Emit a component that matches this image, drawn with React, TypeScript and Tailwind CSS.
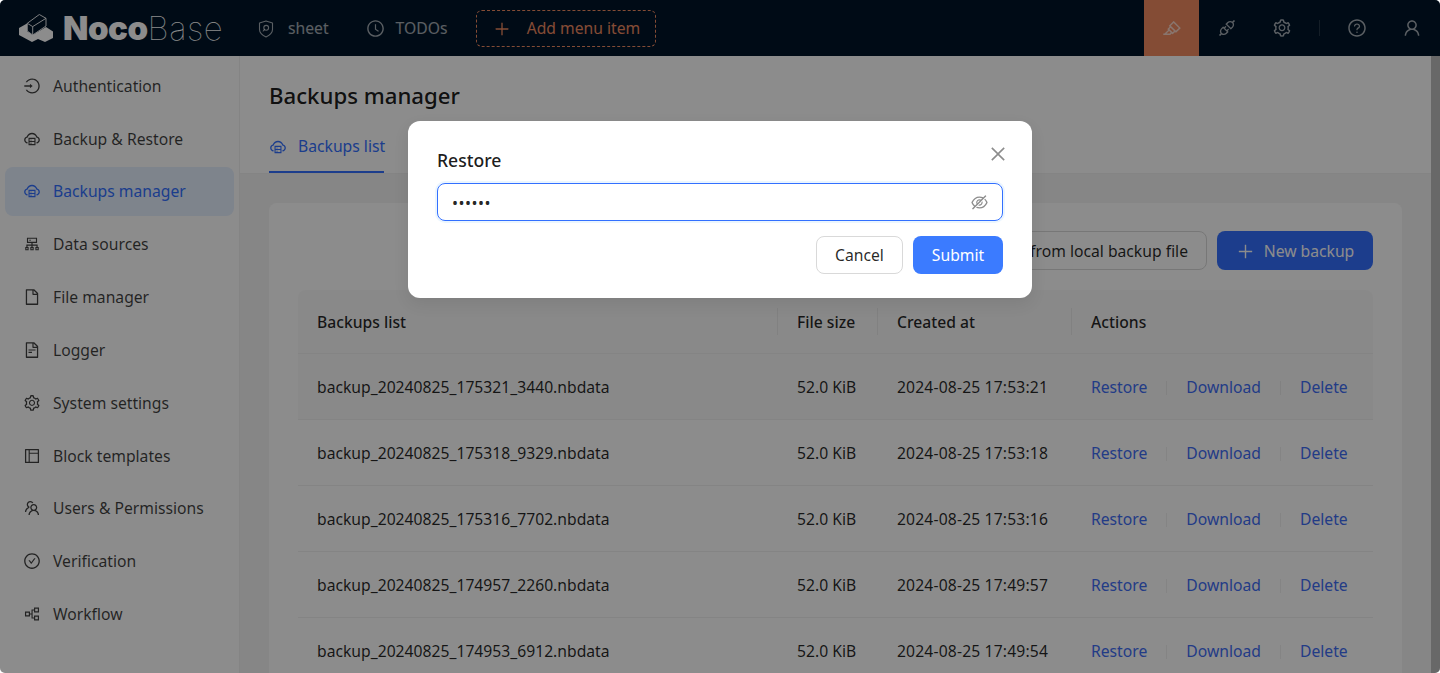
import React from "react";
import {
  AiOutlineLogin, AiOutlineCloudServer, AiOutlineCluster, AiOutlineFile, AiOutlineFileText,
  AiOutlineSetting, AiOutlineLayout, AiOutlineTeam, AiOutlineCheckCircle, AiOutlinePartition,
  AiOutlineHighlight, AiOutlineApi, AiOutlineQuestionCircle, AiOutlineUser, AiOutlineClockCircle,
  AiOutlinePlus, AiOutlineEyeInvisible, AiOutlineClose,
} from "react-icons/ai";

const menu = [
  ["Authentication", AiOutlineLogin],
  ["Backup & Restore", AiOutlineCloudServer],
  ["Backups manager", AiOutlineCloudServer],
  ["Data sources", AiOutlineCluster],
  ["File manager", AiOutlineFile],
  ["Logger", AiOutlineFileText],
  ["System settings", AiOutlineSetting],
  ["Block templates", AiOutlineLayout],
  ["Users & Permissions", AiOutlineTeam],
  ["Verification", AiOutlineCheckCircle],
  ["Workflow", AiOutlinePartition],
] as const;

const rows = [
  ["backup_20240825_175321_3440.nbdata", "2024-08-25 17:53:21"],
  ["backup_20240825_175318_9329.nbdata", "2024-08-25 17:53:18"],
  ["backup_20240825_175316_7702.nbdata", "2024-08-25 17:53:16"],
  ["backup_20240825_174957_2260.nbdata", "2024-08-25 17:49:57"],
  ["backup_20240825_174953_6912.nbdata", "2024-08-25 17:49:54"],
];

function Logo() {
  return (
    <div className="flex items-center ml-[18px] w-[240px] shrink-0">
      <svg width="36" height="28" viewBox="0 0 36 28" className="shrink-0">
        <path d="M1 14 L9 9.5 L9 17 L14.7 21 L28 13 L35 17.5 L35 24 L27 28 L20 25 L14 28 L1 21 Z" fill="#fff" />
        <path d="M9.3 9.3 L21.3 0.5 L28 4.3 L14.7 12.6 Z M14.7 12.6 L14.7 21 M9.3 9.3 L9.3 17 L14.7 21 L28 12 L28 4.3" fill="#001529" stroke="#fff" strokeWidth="0.9" strokeLinejoin="round" />
      </svg>
      <span className="ml-[9px] text-[33px] leading-none text-white font-black tracking-[-0.5px] font-['Inter',sans-serif]">Noco</span>
      <span className="text-[33px] leading-none text-white font-thin tracking-[0.5px] font-['Inter',sans-serif]">Base</span>
    </div>
  );
}

function ShieldIcon() {
  return (
    <svg width="16" height="18" viewBox="0 0 16 18" fill="none" stroke="currentColor" strokeWidth="1.1" className="shrink-0">
      <path d="M8 1 L14.5 3 L14.5 9.5 C14.5 13 11 15.5 8 17 C5 15.5 1.5 13 1.5 9.5 L1.5 3 Z" strokeLinejoin="round" />
      <circle cx="8.2" cy="7.8" r="2.4" />
      <path d="M6.5 9.6 L5.2 11" strokeLinecap="round" />
    </svg>
  );
}

function HeaderIcon({ icon: Icon, className = "" }: { icon: any; className?: string }) {
  return (
    <div className={`w-[55px] h-14 flex items-center justify-center shrink-0 ${className}`}>
      <Icon className="text-[20px] text-white/65" />
    </div>
  );
}

function Action({ children }: { children: React.ReactNode }) {
  return <span className="text-[#3f6df5]">{children}</span>;
}

export default function App() {
  return (
    <div className="bg-white w-[1440px] h-[673px] overflow-hidden">
      <div className="relative w-[1440px] h-[673px] overflow-hidden rounded-[5px] bg-[#f5f5f5] text-[15.7px] text-black/85 font-['Noto_Sans',sans-serif]">
        <header className="h-14 bg-[#001529] flex items-center">
          <Logo />
          <div className="flex items-center text-white/65 pt-[2px]">
            <ShieldIcon />
            <span className="ml-[14px]">sheet</span>
            <AiOutlineClockCircle className="text-[19px] ml-[37px]" />
            <span className="ml-[11px]">TODOs</span>
          </div>
          <div className="ml-[29px] w-[180px] h-[37px] rounded-md border border-dashed border-[#f18b62] flex items-center justify-center gap-[16px] text-[#f18b62] pt-[2px]">
            <AiOutlinePlus className="text-[18px]" />
            <span>Add menu item</span>
          </div>
          <div className="ml-auto flex items-center">
            <HeaderIcon icon={AiOutlineHighlight} className="bg-[#f18b62]" />
            <HeaderIcon icon={AiOutlineApi} />
            <HeaderIcon icon={AiOutlineSetting} />
            <div className="w-px h-4 bg-white/15 ml-[10px] mr-[9px]" />
            <HeaderIcon icon={AiOutlineQuestionCircle} className="w-[54px]" />
            <HeaderIcon icon={AiOutlineUser} className="!w-[56px]" />
          </div>
        </header>

        <div className="flex h-[617px]">
          <aside className="w-[240px] shrink-0 bg-white border-r border-black/[0.06] pt-[5.3px] px-[5px] flex flex-col gap-1">
            {menu.map(([label, Icon]) => {
              const active = label === "Backups manager";
              return (
                <div
                  key={label}
                  className={`h-[48.85px] shrink-0 pl-[18px] flex items-center gap-[12px] rounded-lg ${active ? "bg-[#e6f0ff] text-[#3370ff]" : "text-black/75"}`}
                >
                  <Icon className="text-[18px] shrink-0" />
                  <span className="pt-[1.5px]">{label}</span>
                </div>
              );
            })}
          </aside>

          <main className="flex-1 min-w-0 flex flex-col">
            <div className="h-[118px] bg-white border-b border-black/[0.06] pl-[29px] flex flex-col shrink-0">
              <h1 className="mt-[22px] text-[22.2px] leading-[36px] font-medium text-black/90">Backups manager</h1>
              <div className="mt-[12px] h-[47px] w-[115px] flex items-center gap-[11px] text-[#3370ff] border-b-2 border-[#3370ff] pb-[4px]">
                <AiOutlineCloudServer className="text-[18px] shrink-0" />
                <span className="whitespace-nowrap">Backups list</span>
              </div>
            </div>

            <div className="flex-1 pl-[29px] pr-[29px] pt-[29px] overflow-hidden">
              <div className="bg-white rounded-lg h-[600px] px-[29px] pt-[28px]">
                <div className="flex justify-end gap-[10px]">
                  <div className="h-[39px] rounded-lg border border-[#d9d9d9] flex items-center px-[18px] pt-[2px] whitespace-nowrap">
                    Restore from local backup file
                  </div>
                  <div className="h-[39px] w-[156px] rounded-lg bg-[#3370ff] text-white flex items-center justify-center gap-[9px] pt-[2px]">
                    <AiOutlinePlus className="text-[19px]" />
                    <span>New backup</span>
                  </div>
                </div>

                <div className="mt-[20px]">
                  <div className="h-[64px] bg-[#fafafa] rounded-t-lg border-b border-[#f0f0f0] grid grid-cols-[479px_100px_194px_1fr] items-center font-medium">
                    <div className="pl-[19px] pt-[2px]">Backups list</div>
                    <div className="pl-[19px] h-[27px] flex items-center border-l border-black/[0.06] pt-[2px]">File size</div>
                    <div className="pl-[19px] h-[27px] flex items-center border-l border-black/[0.06] pt-[2px]">Created at</div>
                    <div className="pl-[19px] h-[27px] flex items-center border-l border-black/[0.06] pt-[2px]">Actions</div>
                  </div>
                  {rows.map(([name, date], i) => (
                    <div
                      key={name}
                      className={`h-[65.9px] border-b border-[#f0f0f0] grid grid-cols-[479px_100px_194px_1fr] items-center pt-[3.5px] ${i === 0 ? "bg-[#fafafa]" : ""}`}
                    >
                      <div className="pl-[19px]">{name}</div>
                      <div className="pl-[20px]">52.0 KiB</div>
                      <div className="pl-[20px] tracking-[0.15px]">{date}</div>
                      <div className="pl-[20px] flex items-center">
                        <Action>Restore</Action>
                        <span className="w-px h-[14px] bg-black/[0.06] mx-[19px]" />
                        <Action>Download</Action>
                        <span className="w-px h-[14px] bg-black/[0.06] mx-[19px]" />
                        <Action>Delete</Action>
                      </div>
                    </div>
                  ))}
                </div>
              </div>
            </div>
          </main>
          <div className="w-[9px] shrink-0 bg-[#bdbdbd]" />
        </div>

        <div className="absolute inset-0 bg-black/45" />

        <div className="absolute left-[408px] top-[121px] w-[624px] h-[177px] bg-white rounded-xl shadow-[0_6px_16px_rgba(0,0,0,0.08)] px-[29px] pt-[26px]">
          <AiOutlineClose className="absolute right-[24px] top-[23px] text-[20px] text-black/45" />
          <div className="text-[17.6px] leading-[26px] font-medium text-black/90">Restore</div>
          <div className="mt-[10px] h-[38px] rounded-lg border border-[#3370ff] shadow-[0_0_0_2px_rgba(5,145,255,0.08)] flex items-center pl-[14px] pr-[13px]">
            <span className="text-[16px] tracking-[0.5px] pt-px">••••••</span>
            <AiOutlineEyeInvisible className="ml-auto text-[19px] text-black/45" />
          </div>
          <div className="mt-[15px] flex justify-end gap-[10px]">
            <div className="h-[38px] w-[87px] rounded-lg border border-[#d9d9d9] flex items-center justify-center pt-[2px]">Cancel</div>
            <div className="h-[38px] w-[90px] rounded-lg bg-[#3b7bff] text-white flex items-center justify-center pt-[2px]">Submit</div>
          </div>
        </div>
      </div>
    </div>
  );
}
